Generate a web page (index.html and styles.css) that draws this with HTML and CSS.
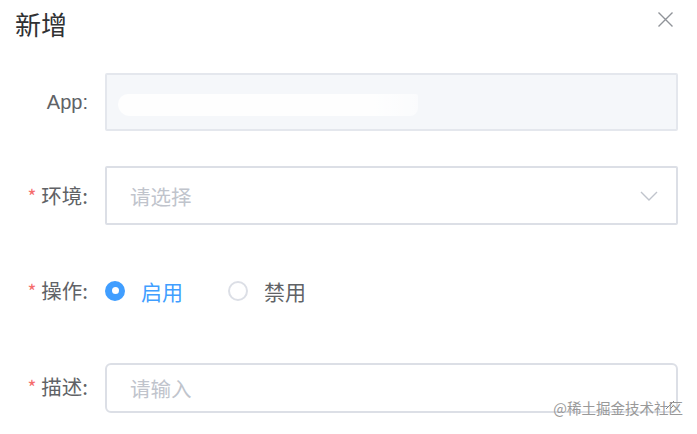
FILE: index.html
```html
<!DOCTYPE html>
<html lang="zh">
<head>
<meta charset="utf-8">
<link rel="stylesheet" href="styles.css">
</head>
<body>
<div class="dialog">
  <div class="header">
    <span class="title">新增</span>
    <button class="close" aria-label="close">
      <svg width="15" height="15" viewBox="0 0 15 15"><path d="M0.5 0.5 L14.5 14.5 M14.5 0.5 L0.5 14.5" stroke="#909399" stroke-width="1.4" fill="none"/></svg>
    </button>
  </div>
  <form class="form">
    <div class="item item-app">
      <label class="label">App:</label>
      <div class="control">
        <div class="input disabled"><span class="blur"></span></div>
      </div>
    </div>
    <div class="item item-env">
      <label class="label"><span class="star">*</span>环境:</label>
      <div class="control">
        <div class="input select">
          <span class="ph">请选择</span>
          <svg class="arrow" width="18" height="10" viewBox="0 0 18 10"><path d="M1 1 L9 9 L17 1" stroke="#c0c4cc" stroke-width="1.4" fill="none"/></svg>
        </div>
      </div>
    </div>
    <div class="item item-radio">
      <label class="label"><span class="star">*</span>操作:</label>
      <div class="control radios">
        <span class="radio checked"><span class="dot"></span><span class="rtext">启用</span></span>
        <span class="radio"><span class="dot"></span><span class="rtext">禁用</span></span>
      </div>
    </div>
    <div class="item item-desc">
      <label class="label"><span class="star">*</span>描述:</label>
      <div class="control">
        <div class="input textarea">
          <span class="ph">请输入</span>
          <svg class="resize" width="10" height="10" viewBox="0 0 10 10"><path d="M1 9 L9 1 M5 9 L9 5" stroke="#606266" stroke-width="0.8" fill="none"/></svg>
        </div>
      </div>
    </div>
  </form>
  <div class="watermark">@稀土掘金技术社区</div>
</div>
</body>
</html>
```
FILE: styles.css
```css
* { box-sizing: border-box; }
html, body { margin: 0; padding: 0; background: #fff; }
body {
  width: 697px; height: 434px; overflow: hidden;
  font-family: "Noto Sans CJK SC", "Noto Sans", sans-serif;
  color: #606266;
}
.dialog { position: relative; width: 697px; height: 434px; }
.header {
  display: flex; justify-content: space-between; align-items: flex-start;
  padding: 4px 24px 0 15px; height: 50px;
}
.title { font-size: 26px; line-height: 40px; color: #303133; }
.close {
  border: 0; background: none; padding: 0; margin-top: 8px;
  width: 15px; height: 15px; display: flex;
}
.form { padding-top: 23px; padding-right: 19px; }
.item { display: flex; align-items: center; }
.label {
  width: 105px; flex: none; text-align: right; padding-right: 17px;
  font-size: 20.5px; color: #606266; line-height: 58px; white-space: nowrap;
}
.item-app .label { font-family: "Liberation Sans", "Noto Sans CJK SC", sans-serif; font-size: 20px; }
.star { color: #f56c6c; margin-right: 5px; font-size: 19px; }
.control { flex: 1; }
.input {
  height: 59px; border: 2px solid #dcdfe6; border-radius: 2px; background: #fff;
  display: flex; align-items: center; padding: 0 22px 0 23px;
  font-size: 20.5px; position: relative;
}
.disabled { background: #f5f7fa; border-color: #e4e7ed; height: 58px; }
.blur {
  display: block; width: 300px; height: 22px; margin-left: -12px; margin-top: 6px;
  background: linear-gradient(90deg, #fff 0%, #fff 85%, rgba(255,255,255,0.6) 100%);
  border-radius: 10px 2px 8px 12px; opacity: 0.9;
}
.item-env { margin-top: 35px; }
.select { justify-content: space-between; }
.ph { color: #c0c4cc; }
.arrow { margin-right: -4px; }
.item-radio { margin-top: 36px; }
.radios { display: flex; align-items: center; gap: 45px; font-size: 21px; }
.radio { display: flex; align-items: center; color: #606266; }
.radio .dot {
  width: 20px; height: 20px; border-radius: 50%; border: 2px solid #dcdfe6;
  background: #fff; margin-right: 16px; position: relative;
}
.radio.checked .dot { background: #409eff; border-color: #409eff; }
.radio.checked .dot::after {
  content: ""; position: absolute; left: 50%; top: 50%; width: 7px; height: 7px;
  margin: -3.5px 0 0 -3.5px; border-radius: 50%; background: #fff;
}
.radio.checked .rtext { color: #409eff; }
.item-desc { margin-top: 43px; align-items: flex-start; }
.item-desc .label { line-height: 46px; }
.textarea { height: 50px; border-radius: 6px; align-items: center; }
.resize { position: absolute; right: 1px; bottom: 1px; }
.watermark {
  position: absolute; right: 14px; top: 398px;
  font-size: 14.5px; color: #999; line-height: 20px;
}
```
